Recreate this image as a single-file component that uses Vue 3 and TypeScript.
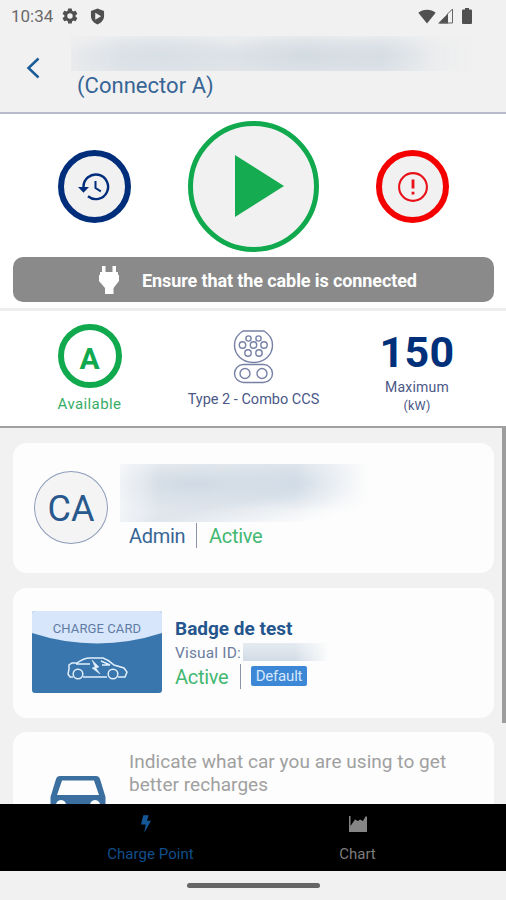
<script setup lang="ts">
import { ref } from 'vue'

type Tab = 'charge' | 'chart'
const activeTab = ref<Tab>('charge')

const pins = [
  { x: 15.5, y: 8.5, r: 2.6 },
  { x: 25.5, y: 8.5, r: 2.6 },
  { x: 9.5, y: 15, r: 3.2 },
  { x: 20.5, y: 15, r: 3.2 },
  { x: 31, y: 15, r: 3.2 },
  { x: 15, y: 23, r: 3.2 },
  { x: 26, y: 23, r: 3.2 },
]
</script>

<template>
  <div class="screen">
    <header class="status-bar">
      <span class="clock">10:34</span>
      <svg class="gear" viewBox="0 0 24 24"><path fill-rule="evenodd" d="M19.4 13a7.700 7.700 0 0 0 0-2l2.100-1.700a.5.5 0 0 0 .1-.6l-2-3.500a.5.5 0 0 0-.6-.2l-2.500 1a7 7 0 0 0-1.700-1l-.4-2.600a.5.5 0 0 0-.5-.4h-4a.5.5 0 0 0-.5.4L9 5a7 7 0 0 0-1.700 1l-2.500-1a.5.5 0 0 0-.6.200l-2 3.500a.5.5 0 0 0 .1.600L4.500 11a8 8 0 0 0 0 2l-2.200 1.700a.5.5 0 0 0-.1.600l2 3.500c.1.200.4.300.6.200l2.500-1A7 7 0 0 0 9 19l.4 2.600c0 .2.200.4.500.4h4c.3 0 .5-.2.500-.4l.4-2.600a7 7 0 0 0 1.700-1l2.500 1c.2.100.5 0 .6-.2l2-3.500a.5.5 0 0 0-.1-.6zM12 15.600a3.600 3.600 0 1 1 0-7.200 3.600 3.600 0 0 1 0 7.200z" /></svg>
      <svg class="shield" viewBox="0 0 16 18"><path fill-rule="evenodd" d="M8 0.500 15 3v5.500c0 4-3 7.500-7 9-4-1.500-7-5-7-9V3zM5.600 5v7.400l6.200-3.700z" /></svg>
      <span class="spacer"></span>
      <svg class="wifi" viewBox="0 0 18 15"><path d="M9 14.500 0.300 3.800C5 -.2 13-.2 17.700 3.800z" /></svg>
      <svg class="signal" viewBox="0 0 16 16"><path d="M0 15.500 10 5.500v10z" /><path d="M9 6.500 14.500 1v14H2" class="signal-line" /></svg>
      <svg class="battery" viewBox="0 0 10 16"><path d="M3 0h4v1.500h2q1 0 1 1V15q0 1-1 1H1q-1 0-1-1V2.500q0-1 1-1h2z" /></svg>
    </header>

    <div class="title-bar">
      <svg class="back" viewBox="0 0 14 22"><path d="M12.500 1.500 2.500 11l10 9.500" /></svg>
      <div class="title">
        <div class="veil veil-title"></div>
        <h1>(Connector A)</h1>
      </div>
    </div>

    <section class="controls">
      <div class="actions">
        <button class="round history" aria-label="History">
          <svg viewBox="0 0 32 28"><path class="line" d="M5.500 14A12.300 12.300 0 1 1 10 23.300" /><path class="fill" d="M0 14h11l-5.500 5.800z" /><path class="line thin" d="M17.500 8v7l5.300 3.300" /></svg>
        </button>
        <button class="round play" aria-label="Start">
          <svg viewBox="0 0 49 62"><path d="M0 0 49 31 0 62z" /></svg>
        </button>
        <button class="round alert" aria-label="Report">
          <svg viewBox="0 0 30 30"><circle cx="15" cy="15" r="13.900" /><path class="mark" d="M15 7.500v9M15 19.800v2.600" /></svg>
        </button>
      </div>
      <div class="banner">
        <svg viewBox="0 0 20 28"><path d="M3 0h3.500v6h7V0H17v6h2v3h1v6l-5.500 7V28h-8.500v-6L0 15V9h1V6h2z" /></svg>
        <span>Ensure that the cable is connected</span>
      </div>
    </section>

    <section class="stats">
      <div class="stat available">
        <div class="letter"><span>A</span></div>
        <span class="caption">Available</span>
      </div>
      <div class="stat connector">
        <svg viewBox="0 0 41 54">
          <path d="M10 1h21c5 3 8.500 8.500 8.500 14 0 10-8 17.500-19 17.500S1.500 25 1.500 15C1.500 9.500 5 4 10 1z" />
          <circle v-for="(p, i) in pins" :key="i" :cx="p.x" :cy="p.y" :r="p.r" />
          <rect x="1.500" y="34.500" width="38" height="18" rx="9" />
          <circle cx="12" cy="43.500" r="5" /><circle cx="29" cy="43.500" r="5" />
        </svg>
        <span class="caption">Type 2 - Combo CCS</span>
      </div>
      <div class="stat power">
        <strong>150</strong>
        <span class="caption">Maximum</span>
        <span class="unit">(kW)</span>
      </div>
    </section>

    <main class="list">
      <article class="card user">
        <div class="avatar">CA</div>
        <div class="info">
          <div class="veil veil-user"></div>
          <div class="row"><span class="admin">Admin</span><i class="bar"></i><span class="active">Active</span></div>
        </div>
      </article>

      <article class="card badge">
        <div class="charge-card">
          <svg class="curve" viewBox="0 0 130 82"><path d="M0 0h130v22Q65 43 0 22z" /></svg>
          <span>CHARGE CARD</span>
          <svg class="ev" viewBox="0 0 61 23"><path d="M6 20H3L1 17l1-5V8l3-2h5C14 3 18 1 23 1h13q6 2 11 7l10 3 3 4-2 5h-7M16 20h24M9 7h14M34 4l9 4h-8" /><circle cx="11" cy="17" r="4.800" /><circle cx="46" cy="17" r="4.800" /><path class="bolt" d="M25 3l7 7-3 1 4 6-8-6 3-1z" /></svg>
        </div>
        <div class="info">
          <h2>Badge de test</h2>
          <div class="visual"><span>Visual ID:</span><div class="veil veil-id"></div></div>
          <div class="row"><span class="active">Active</span><i class="bar"></i><span class="tag">Default</span></div>
        </div>
      </article>

      <article class="card car">
        <svg viewBox="0 0 56 48"><path fill-rule="evenodd" d="M10 1h36q3 0 4 3l5.500 18v22H47v-6H9v6H.5V22L6 4q1-3 4-3zM12 5.500 7 20h42L44 5.500zM11 25a5 5 0 1 0 .1 0zM45 25a5 5 0 1 0 .1 0z" /></svg>
        <p>Indicate what car you are using to get<br />better recharges</p>
      </article>
      <i class="scrollbar"></i>
    </main>

    <nav class="tabs">
      <button class="tab first" :class="{ on: activeTab === 'charge' }" @click="activeTab = 'charge'">
        <svg class="flash" viewBox="0 0 11 19"><path d="M2.500 0h6L6.500 6H11L3.500 19l1.700-9H0z" /></svg>
        <span>Charge Point</span>
      </button>
      <button class="tab second" :class="{ on: activeTab === 'chart' }" @click="activeTab = 'chart'">
        <svg class="graph" viewBox="0 0 18 16"><path d="M0 0h1.500v10L6 3.500l3 1.500 2-1.500L14 5l2.500-4.500H18V16H0z" /></svg>
        <span>Chart</span>
      </button>
    </nav>
    <footer class="gesture"><i></i></footer>
  </div>
</template>

<style>
body { margin: 0; background: #f1f1f1; }
</style>

<style scoped>
* { box-sizing: border-box; }
.screen { width: 506px; height: 900px; display: flex; flex-direction: column; overflow: hidden; background: #f1f1f1; font-family: Roboto, "Liberation Sans", sans-serif; color: #1f548b; }
button { border: 0; padding: 0; margin: 0; background: none; font: inherit; }
svg { display: block; flex: none; }
h1, h2, p { margin: 0; font-weight: 400; }

.status-bar { height: 32px; display: flex; align-items: center; padding: 0 34px 0 11px; color: #6a6a6a; fill: #505050; }
.clock { font-size: 17px; letter-spacing: 0; width: 50px; }
.gear { width: 18px; height: 18px; }
.shield { width: 15px; height: 17px; margin-left: 11px; }
.spacer { flex: 1; }
.wifi { width: 18px; height: 15px; }
.signal { width: 16px; height: 16px; margin-left: 2px; }
.signal-line { fill: none; stroke: #666; stroke-width: 1; }
.battery { width: 10px; height: 16px; margin-left: 8px; }

.title-bar { height: 82px; flex: none; display: flex; padding-left: 26px; border-bottom: 2px solid #b9bbcd; }
.back { width: 14px; height: 22px; margin-top: 25px; fill: none; stroke: #1b5b98; stroke-width: 2.500; }
.title { margin-left: 31px; padding-top: 4px; }
h1 { margin-left: 6px; margin-top: 2px; font-size: 22px; line-height: 26px; letter-spacing: 0.03px; color: #376595; }
.veil-title { width: 404px; height: 35px; background: radial-gradient(ellipse 90px 24px at 90px 20px, #d8dfe6, transparent), radial-gradient(ellipse 90px 24px at 235px 20px, #d3dbe2, transparent), radial-gradient(ellipse 80px 24px at 330px 20px, #d4dce3, transparent), linear-gradient(#ecedee, #dfe3e8 55%, #e1e5e9); mask-image: linear-gradient(90deg, rgba(0, 0, 0, 0.5), #000 12%, #000 77%, rgba(0, 0, 0, 0.25) 90%, transparent); }

.controls { height: 197px; flex: none; background: #fff; border-bottom: 3px solid #eee; }
.actions { height: 143px; padding: 1px 57px 0 58px; display: flex; align-items: center; justify-content: space-between; }
.round { border-radius: 50%; background: #f1f1f1; display: flex; align-items: center; justify-content: center; }
.history, .alert { width: 73px; height: 73px; border: 6px solid #002e7b; }
.history svg { width: 32px; height: 28px; margin-left: -1px; margin-top: 1px; }
.history .line { fill: none; stroke: #002e7b; stroke-width: 2.400; }
.history .thin { stroke-width: 2; }
.history .fill { fill: #002e7b; }
.play { width: 131px; height: 131px; border: 5px solid #10a94d; }
.play svg { width: 49px; height: 62px; margin-left: 12px; fill: #15ab50; }
.alert { border-color: #f50000; }
.alert svg { width: 30px; height: 30px; margin-top: 1px; fill: none; stroke: #e91119; stroke-width: 2.100; }
.alert .mark { stroke-width: 2.800; }
.banner { height: 45px; margin: 0 12px 0 13px; border-radius: 10px; background: #8a8a8a; color: #fff; display: flex; align-items: center; padding-left: 86px; font-size: 18px; font-weight: 700; }
.banner svg { width: 20px; height: 28px; fill: #fff; }
.banner span { margin-left: 23px; padding-top: 2px; letter-spacing: -0.1px; white-space: nowrap; }

.stats { height: 117px; flex: none; display: flex; background: #fff; border-bottom: 2px solid #a0a0a0; }
.stat { display: flex; flex-direction: column; align-items: center; white-space: nowrap; color: #4a5888; }
.stat.available { width: 179px; padding-top: 13px; color: #36ad66; }
.letter { width: 64px; height: 64px; border: 6px solid #10a94d; border-radius: 50%; display: flex; justify-content: center; align-items: center; font-size: 30px; font-weight: 700; color: #10a94d; }
.letter span { padding-top: 4px; }
.available .caption { font-size: 15px; line-height: 18px; margin-top: 7px; letter-spacing: 0.4px; }
.stat.connector { width: 149px; padding-top: 19px; }
.connector svg { width: 41px; height: 54px; fill: none; stroke: #7780a5; stroke-width: 1.400; }
.connector .caption { font-size: 14.500px; line-height: 18px; margin-top: 7px; }
.stat.power { width: 178px; padding-top: 16px; }
.power strong { font-size: 43px; line-height: 50px; letter-spacing: 0.3px; color: #00307a; }
.power .caption { font-size: 14px; line-height: 18px; letter-spacing: 0.2px; margin-top: 1px; }
.power .unit { font-size: 12.500px; line-height: 19px; letter-spacing: 0.2px; }

.list { height: 376px; flex: none; position: relative; overflow: hidden; padding: 15px 12px 0 13px; }
.card { height: 130px; margin-bottom: 14.500px; border-radius: 14px; background: #fdfdfd; display: flex; }
.user { padding: 21px 0 0 21px; }
.avatar { width: 74px; height: 73px; margin-top: 7px; flex: none; border: 1px solid #8e9dbb; border-radius: 50%; background: #f4f4f4; display: flex; align-items: center; justify-content: center; font-size: 36px; padding-top: 3px; color: #28598d; }
.user .info { margin-left: 12px; }
.veil-user { width: 258px; height: 58px; background: radial-gradient(ellipse 130px 28px at 75px 20px, #d0dae4, transparent), radial-gradient(ellipse 100px 28px at 190px 19px, #d0dbe6, transparent), linear-gradient(167deg, #eceff3, #dfe5ec 55%, #fdfdfd 88%); mask-image: linear-gradient(90deg, rgba(0, 0, 0, 0.4), #000 15%, #000 68%, transparent 97%); }
.row { display: flex; align-items: center; font-size: 20px; line-height: 24px; }
.bar { width: 1px; height: 25px; background: #8d94a9; }
.active { color: #43b873; letter-spacing: -0.3px; }
.user .row { margin-left: 9px; height: 27px; }
.user .admin { width: 67px; letter-spacing: -0.3px; color: #376595; }
.user .active { margin-left: 12px; }

.badge { padding: 23.500px 0 0 19px; }
.charge-card { width: 130px; height: 82px; flex: none; position: relative; border-radius: 3px; background: #3976ad; overflow: hidden; display: flex; flex-direction: column; align-items: center; }
.curve { position: absolute; inset: 0; fill: #d7e6fa; }
.charge-card span { position: relative; margin-top: 9px; font-size: 13px; line-height: 17px; letter-spacing: 0.1px; color: #5f7ca5; white-space: nowrap; }
.ev { width: 61px; height: 23px; margin-top: 20px; fill: none; stroke: #e1effc; stroke-width: 1.500; }
.ev .bolt { fill: #e1effc; stroke-width: 0.500; }
.ev circle { fill: #3976ad; }
.badge .info { margin-left: 13px; padding-top: 5px; }
h2 { font-size: 19px; line-height: 25px; font-weight: 700; color: #24568d; }
.visual { display: flex; align-items: center; height: 21px; font-size: 15.500px; color: #6b7d9f; }
.visual span { width: 68px; padding-top: 2px; letter-spacing: 0.15px; white-space: nowrap; }
.veil-id { width: 86px; height: 18px; background: linear-gradient(#e5ebf1, #d2dce6); mask-image: linear-gradient(90deg, #000 60%, transparent); }
.badge .row { height: 28px; }
.badge .active { width: 65px; padding-top: 1px; }
.badge .tag { margin-left: 10px; width: 56px; height: 20px; border-radius: 2px; background: #3c87d6; color: #d5e8fb; text-align: center; font-size: 15px; line-height: 21px; letter-spacing: -0.2px; }

.car { padding: 43px 0 0 37px; }
.car svg { width: 56px; height: 48px; fill: #3b6f9f; }
.car p { margin: -25px 0 0 23px; font-size: 19px; line-height: 23px; letter-spacing: 0.05px; color: #a0a0a0; white-space: nowrap; }
.scrollbar { position: absolute; top: 0; right: 0; width: 4px; height: 295px; background: #9d9d9d; }

.tabs { height: 67px; flex: none; display: flex; background: #000; }
.tab { display: flex; flex-direction: column; align-items: center; color: #7d7d7d; fill: #858585; font-size: 15px; line-height: 18px; }
.tab.on { color: #104f8a; fill: #155899; }
.first { width: 301px; }
.second { width: 113px; }
.flash { width: 10px; height: 18px; margin-top: 11px; margin-right: 10px; }
.graph { width: 18px; height: 16px; margin-top: 12px; }
.first span { margin-top: 12px; letter-spacing: 0.05px; }
.second span { margin-top: 13px; }
.gesture { flex: 1; display: flex; justify-content: center; padding-top: 12px; }
.gesture i { width: 133px; height: 5px; border-radius: 2.500px; background: #666; }
</style>
